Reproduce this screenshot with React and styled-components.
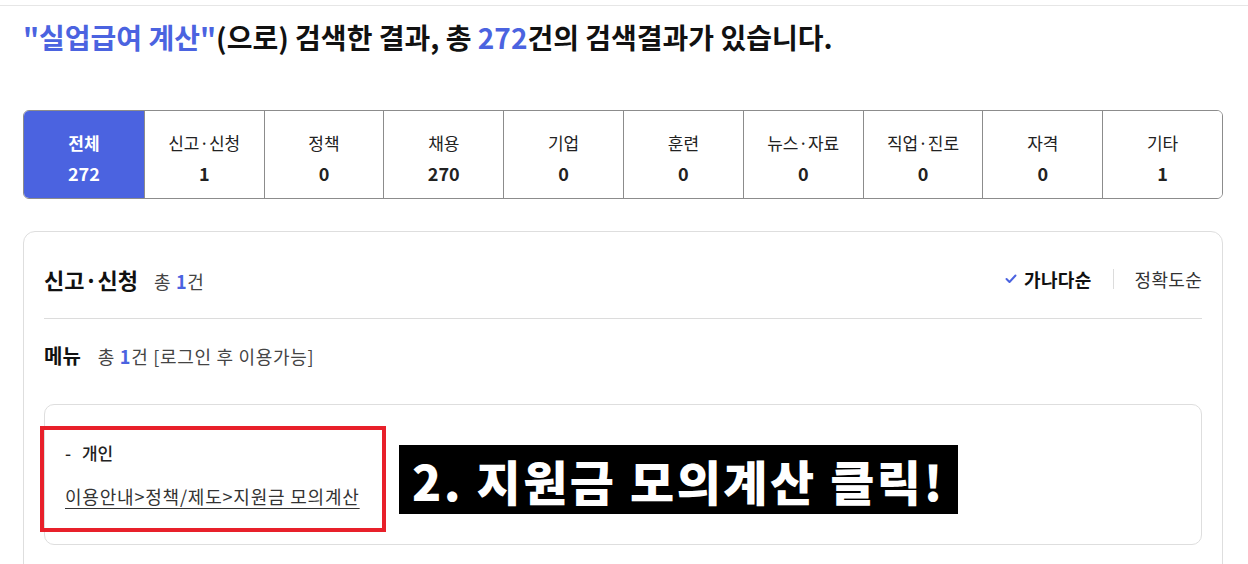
import React from 'react'
import styled, { createGlobalStyle } from 'styled-components'

const GlobalStyle = createGlobalStyle`
  body {
    margin: 0;
    background: #fff;
    font-family: "Noto Sans CJK KR", "Noto Sans", sans-serif;
    color: #222;
  }
`

const blue = '#4b63e0'

const TopBar = styled.div`
  height: 5px;
  border-bottom: 1px solid #e6e6e6;
`

const Page = styled.main`
  width: 1200px;
  padding: 0 0 0 23px;
`

const Heading = styled.h1`
  margin: 12px 0 0;
  font-size: 28px;
  line-height: 38px;
  font-weight: 700;
  color: #111;
  letter-spacing: 0;
`

const Hl = styled.span`
  color: ${blue};
`

const Tabs = styled.ul`
  list-style: none;
  margin: 54px 0 0;
  padding: 0;
  display: grid;
  grid-template-columns: repeat(10, 1fr);
  height: 89px;
  box-sizing: border-box;
  border: 1px solid #8c8c8c;
  border-radius: 6px;
  overflow: hidden;
`

const Tab = styled.li`
  display: flex;
  flex-direction: column;
  align-items: center;
  justify-content: center;
  gap: 6px;
  padding-top: 6px;
  font-size: 17px;
  line-height: 24px;
  color: ${p => (p.$active ? '#fff' : '#222')};
  background: ${p => (p.$active ? blue : '#fff')};
  border-left: ${p => (p.$first ? 'none' : '1px solid #8c8c8c')};
  font-weight: ${p => (p.$active ? 700 : 400)};
  strong {
    font-weight: 700;
    font-size: 18px;
  }
`

const Card = styled.section`
  margin-top: 32px;
  box-sizing: border-box;
  border: 1px solid #dedede;
  border-radius: 12px;
  padding: 0 20px 40px;
`

const CardHead = styled.div`
  display: flex;
  align-items: center;
  justify-content: space-between;
  padding: 30px 0 22px;
  border-bottom: 1px solid #dcdcdc;
`

const TitleGroup = styled.div`
  display: flex;
  align-items: baseline;
  gap: 16px;
`

const Title = styled.h2`
  margin: 0;
  font-size: 22px;
  line-height: 34px;
  font-weight: 700;
  color: #111;
`

const Count = styled.span`
  font-size: 18px;
  letter-spacing: 0.7px;
  color: #444;
  b {
    color: ${blue};
    font-weight: 700;
  }
`

const Sorts = styled.div`
  display: flex;
  align-items: center;
`

const SortItem = styled.button`
  border: none;
  background: none;
  padding: 0;
  font-family: inherit;
  font-size: 18px;
  letter-spacing: 0.3px;
  display: flex;
  align-items: center;
  gap: 7px;
  color: ${p => (p.$on ? '#111' : '#333')};
  font-weight: ${p => (p.$on ? 700 : 400)};
`

const Sep = styled.span`
  width: 1px;
  height: 20px;
  background: #dcdcdc;
  margin: 0 21px;
`

const SubHead = styled.div`
  display: flex;
  align-items: baseline;
  gap: 17px;
  padding-top: 24px;
`

const SubTitle = styled.h3`
  margin: 0;
  font-size: 20px;
  line-height: 26px;
  font-weight: 700;
  color: #111;
`

const ResultBox = styled.div`
  position: relative;
  margin-top: 35px;
  border: 1px solid #dedede;
  border-radius: 10px;
  padding: 36px 20px 36px;
  display: flex;
  flex-direction: column;
  gap: 19px;
`

const Group = styled.div`
  font-size: 17px;
  line-height: 24px;
  font-weight: 500;
  color: #222;
  word-spacing: 7px;
`

const Link = styled.a`
  font-size: 18px;
  line-height: 24px;
  letter-spacing: 0.8px;
  color: #333;
  text-decoration: underline;
  text-underline-offset: 4px;
  align-self: flex-start;
`

const RedMark = styled.div`
  position: absolute;
  left: -5px;
  top: 21px;
  width: 346px;
  height: 106px;
  box-sizing: border-box;
  border: 4px solid #e8202a;
`

const Callout = styled.div`
  position: absolute;
  left: 354px;
  top: 40px;
  width: 559px;
  height: 69px;
  background: #000;
  color: #fff;
  display: flex;
  align-items: center;
  justify-content: center;
  font-size: 48px;
  font-weight: 900;
  letter-spacing: 2.5px;
  white-space: nowrap;
`

const Check = () => (
  <svg width="12" height="10" viewBox="0 0 12 10">
    <polyline points="1.5,5 4.5,8 10.5,1.5" fill="none" stroke={blue} strokeWidth="2" strokeLinecap="round" strokeLinejoin="round" />
  </svg>
)

const tabs = [
  ['전체', 272],
  ['신고·신청', 1],
  ['정책', 0],
  ['채용', 270],
  ['기업', 0],
  ['훈련', 0],
  ['뉴스·자료', 0],
  ['직업·진로', 0],
  ['자격', 0],
  ['기타', 1],
]

export default function App() {
  return (
    <>
      <GlobalStyle />
      <TopBar />
      <Page>
        <Heading>
          <Hl>"실업급여 계산"</Hl>(으로) 검색한 결과, 총 <Hl>272</Hl>건의 검색결과가 있습니다.
        </Heading>

        <Tabs>
          {tabs.map(([label, n], i) => (
            <Tab key={label} $active={i === 0} $first={i === 0}>
              <span>{label}</span>
              <strong>{n}</strong>
            </Tab>
          ))}
        </Tabs>

        <Card>
          <CardHead>
            <TitleGroup>
              <Title>신고·신청</Title>
              <Count>총 <b>1</b>건</Count>
            </TitleGroup>
            <Sorts>
              <SortItem $on><Check />가나다순</SortItem>
              <Sep />
              <SortItem>정확도순</SortItem>
            </Sorts>
          </CardHead>

          <SubHead>
            <SubTitle>메뉴</SubTitle>
            <Count>총 <b>1</b>건 [로그인 후 이용가능]</Count>
          </SubHead>

          <ResultBox>
            <Group>- 개인</Group>
            <Link href="#">이용안내&gt;정책/제도&gt;지원금 모의계산</Link>
            <RedMark />
            <Callout>2. 지원금 모의계산 클릭!</Callout>
          </ResultBox>
        </Card>
      </Page>
    </>
  )
}
